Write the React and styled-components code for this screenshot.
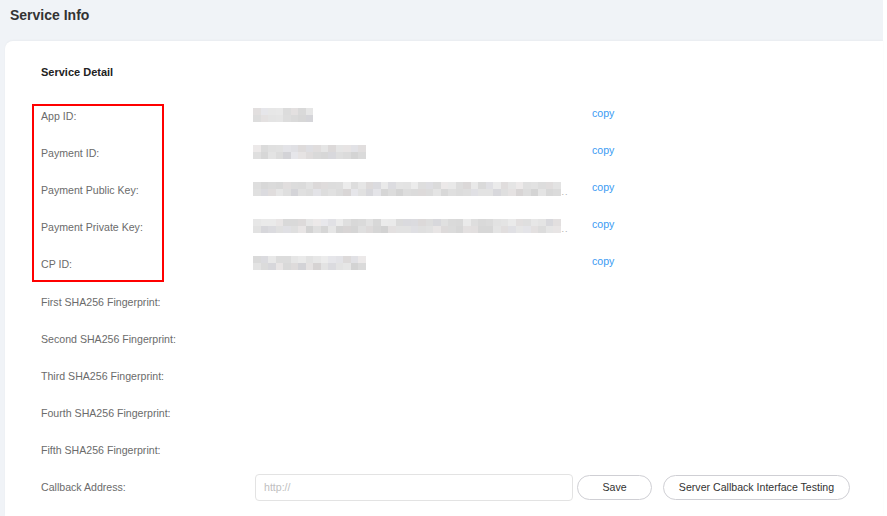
import React from 'react';
import styled, { createGlobalStyle } from 'styled-components';

const GlobalStyle = createGlobalStyle`
  html, body {
    margin: 0;
    padding: 0;
    background: #fff;
    font-family: 'Liberation Sans', Arial, sans-serif;
  }
`;

// pseudo random so the blurred values look the same on every load
const makeRandom = (seed) => {
  let s = seed;
  return () => {
    s = (s * 9301 + 49297) % 233280;
    return s / 233280;
  };
};

const cellColor = (rnd, dark) => {
  const base = dark ? 230 : 236;
  const v = Math.round(base - rnd() * 20);
  const tint = rnd();
  const r = v + (tint > 0.8 ? 3 : 0);
  const b = v + (tint < 0.2 ? 4 : 0);
  return `rgb(${r}, ${v}, ${b})`;
};

const fields = [
  { label: 'App ID:', cells: 8, seed: 11 },
  { label: 'Payment ID:', cells: 15, seed: 23 },
  { label: 'Payment Public Key:', cells: 41, seed: 37, cut: true },
  { label: 'Payment Private Key:', cells: 41, seed: 51, cut: true },
  { label: 'CP ID:', cells: 15, seed: 67 },
];

const fingerprints = ['First', 'Second', 'Third', 'Fourth', 'Fifth'];

const Blurred = ({ cells, seed, cut }) => {
  const rnd = makeRandom(seed);
  const rows = [0, 1].map((r) =>
    Array.from({ length: cells }, () => cellColor(rnd, r === 1))
  );
  return (
    <BlurWrap>
      <CellGrid>
        {rows.map((row, i) => (
          <CellRow key={i}>
            {row.map((c, j) => (
              <Cell key={j} style={{ background: c }} />
            ))}
          </CellRow>
        ))}
      </CellGrid>
      {cut && <Dots>..</Dots>}
    </BlurWrap>
  );
};

const App = () => {
  return (
    <>
      <GlobalStyle />
      <Page>
        <Title>Service Info</Title>
        <Card>
          <SectionTitle>Service Detail</SectionTitle>
          <Marked>
            {fields.map((f) => (
              <Row key={f.label}>
                <Label>{f.label}</Label>
                <Value>
                  <Blurred cells={f.cells} seed={f.seed} cut={f.cut} />
                </Value>
                <Copy>copy</Copy>
              </Row>
            ))}
          </Marked>
          <Rest>
            {fingerprints.map((n) => (
              <Row key={n}>
                <Label>{n} SHA256 Fingerprint:</Label>
              </Row>
            ))}
            <Row>
              <Label>Callback Address:</Label>
              <Actions>
                <Input placeholder="http://" />
                <PillButton>Save</PillButton>
                <PillButton wide>Server Callback Interface Testing</PillButton>
              </Actions>
            </Row>
          </Rest>
        </Card>
      </Page>
    </>
  );
};

const Page = styled.div`
  width: 883px;
  min-height: 516px;
  background: #f0f3f7;
`;

const Title = styled.h1`
  margin: 0;
  height: 41px;
  box-sizing: border-box;
  padding: 7px 0 0 10px;
  font-size: 14px;
  line-height: 16px;
  font-weight: bold;
  color: #333;
`;

const Card = styled.div`
  margin-left: 5px;
  min-height: 475px;
  background: #fff;
  border-top-left-radius: 8px;
  box-shadow: 0 -1px 2px rgba(0, 0, 0, 0.03);
  padding: 24.5px 0 0 36px;
  box-sizing: border-box;
`;

const SectionTitle = styled.div`
  font-size: 11px;
  line-height: 13px;
  font-weight: bold;
  color: #222;
  margin-bottom: 19px;
`;

const Marked = styled.div`
  position: relative;
  &::after {
    content: '';
    position: absolute;
    left: -9px;
    top: 6.5px;
    width: 132px;
    height: 178px;
    border: 2px solid #f00;
    box-sizing: border-box;
    pointer-events: none;
  }
`;

const Rest = styled.div`
  padding-top: 1px;
`;

const Row = styled.div`
  display: flex;
  align-items: center;
  height: 37px;
`;

const Label = styled.div`
  width: 212px;
  flex: none;
  font-size: 10.6px;
  line-height: 13px;
  color: #6b6b6b;
`;

const Value = styled.div`
  width: 339px;
  flex: none;
  display: flex;
  align-items: center;
  margin-top: -2px;
`;

const BlurWrap = styled.div`
  display: flex;
  align-items: flex-end;
`;

const CellGrid = styled.div`
  display: flex;
  flex-direction: column;
  filter: blur(0.5px);
`;

const CellRow = styled.div`
  display: flex;
`;

const Cell = styled.span`
  width: 7.5px;
  height: 7px;
`;

const Dots = styled.span`
  font-size: 9px;
  line-height: 8px;
  color: #aaa;
  margin-left: 1px;
  letter-spacing: 1px;
`;

const Copy = styled.a`
  font-size: 10.6px;
  line-height: 13px;
  color: #3b9bf3;
  cursor: pointer;
  margin-top: -6px;
`;

const Actions = styled.div`
  display: flex;
  align-items: center;
  margin-left: 2px;
`;

const Input = styled.input`
  width: 318px;
  height: 27px;
  box-sizing: border-box;
  border: 1px solid #e3e3e3;
  border-radius: 4px;
  padding: 0 8px;
  font-family: inherit;
  font-size: 10.6px;
  color: #333;
  outline: none;
  &::placeholder {
    color: #c0c0c0;
  }
`;

const PillButton = styled.button`
  height: 25px;
  width: ${({ wide }) => (wide ? '187px' : '75px')};
  margin-left: ${({ wide }) => (wide ? '11px' : '4px')};
  border: 1px solid #cfcfd4;
  border-radius: 13px;
  background: #fff;
  font-family: inherit;
  font-size: 10.6px;
  color: #333;
  padding: 0;
  cursor: pointer;
`;

export default App;
